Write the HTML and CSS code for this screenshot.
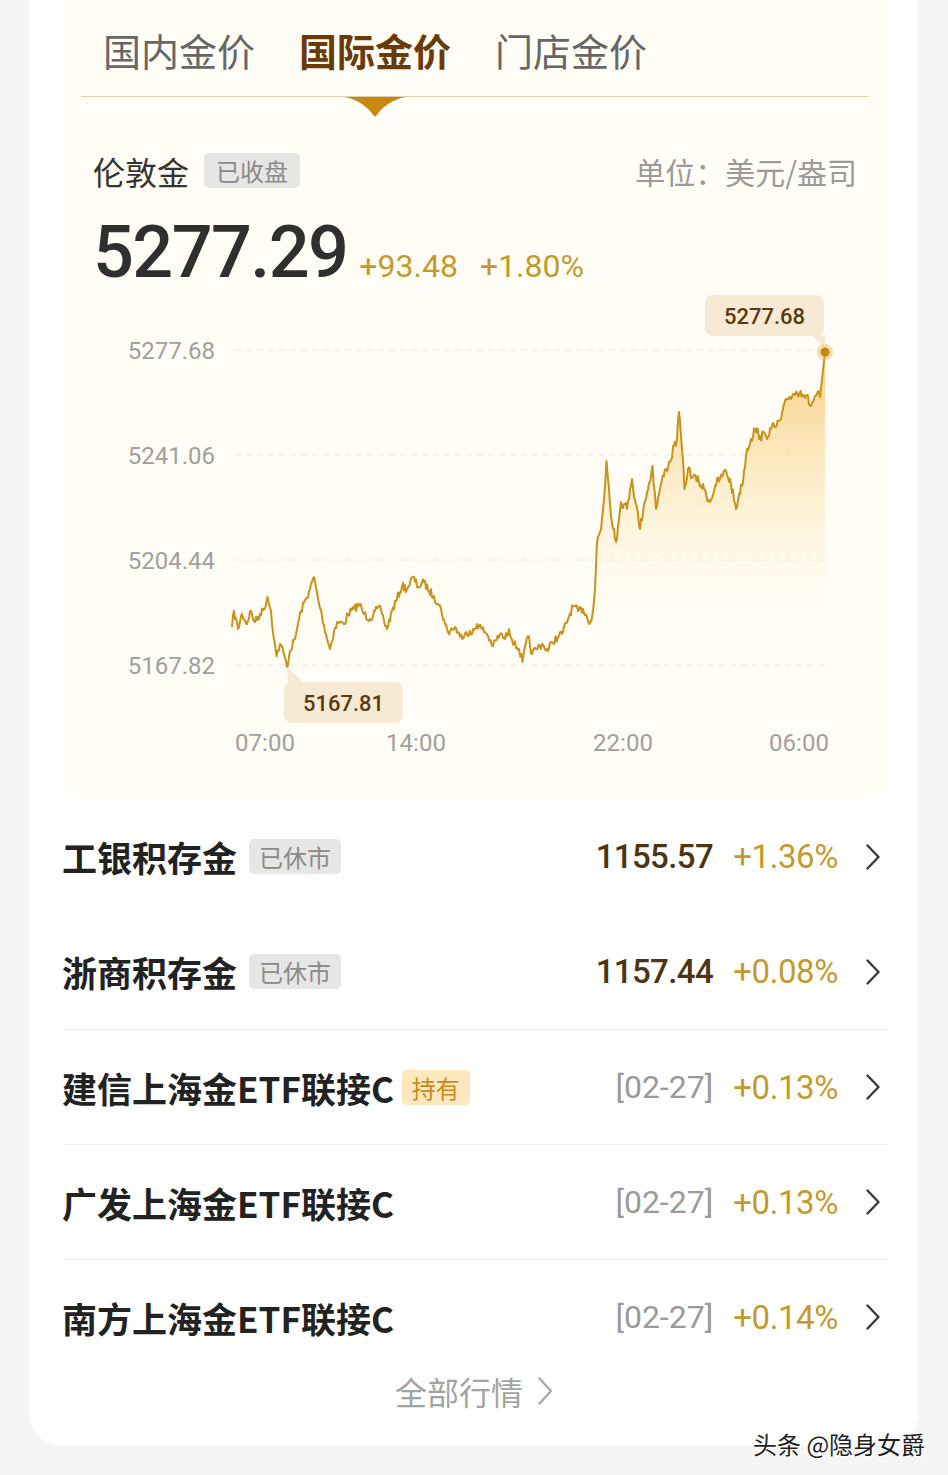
FILE: index.html
```html
<!DOCTYPE html>
<html lang="zh-CN">
<head>
    <meta charset="UTF-8">
    <meta name="viewport" content="width=device-width, initial-scale=1.0">
    <title>金价</title>
    <link rel="stylesheet" href="styles.css">
</head>
<body>
    <div class="card">
        <div class="panel">
            <div class="tabs">
                <span class="tab">国内金价</span>
                <span class="tab active">国际金价</span>
                <span class="tab">门店金价</span>
            </div>

            <div class="head">
                <span class="name">伦敦金</span>
                <span class="chip">已收盘</span>
                <span class="unit">单位：美元/盎司</span>
            </div>

            <div class="price">
                <span class="big">5277.29</span>
                <span class="chg">+93.48</span>
                <span class="chg">+1.80%</span>
            </div>

            <svg class="chart" width="826" height="510" viewBox="0 0 826 510">
                <defs>
                    <linearGradient id="fillgrad" gradientUnits="userSpaceOnUse" x1="0" y1="60" x2="0" y2="330">
                        <stop offset="0" stop-color="#f6bd55" stop-opacity="0.75"/>
                        <stop offset="0.55" stop-color="#fbdc9c" stop-opacity="0.4"/>
                        <stop offset="1" stop-color="#fdf0d0" stop-opacity="0"/>
                    </linearGradient>
                </defs>
                <g class="grid">
                    <line x1="173" y1="61" x2="768" y2="61"/>
                    <line x1="173" y1="166" x2="768" y2="166"/>
                    <line x1="173" y1="271" x2="768" y2="271"/>
                    <line x1="173" y1="376" x2="768" y2="376"/>
                </g>
                <g class="ylab">
                    <text x="153" y="69.5">5277.68</text>
                    <text x="153" y="174.5">5241.06</text>
                    <text x="153" y="279.5">5204.44</text>
                    <text x="153" y="384.5">5167.82</text>
                </g>
                <g class="xlab">
                    <text x="203" y="461.5">07:00</text>
                    <text x="354" y="461.5">14:00</text>
                    <text x="561" y="461.5">22:00</text>
                    <text x="737" y="461.5">06:00</text>
                </g>
                <path id="area" fill="url(#fillgrad)" d=""/>
                <path id="line" class="line" d=""/>

                <rect class="tip" x="643" y="6" width="119" height="41" rx="8"/>
                <polygon class="tip" points="749,46 764,46 762,58"/>
                <text class="tiptext" x="702.5" y="34.5">5277.68</text>
                <circle cx="763" cy="63" r="8" fill="#e3b85a" fill-opacity="0.45"/>
                <circle cx="763" cy="63" r="4.5" fill="#c8870f"/>

                <polygon class="tip" points="225,378 226,394 242,394"/>
                <rect class="tip" x="222" y="393" width="119" height="41" rx="8"/>
                <text class="tiptext" x="281.5" y="421.5">5167.81</text>
            </svg>
        </div>

        <div class="list">
            <div class="row">
                <span class="rname">工银积存金</span>
                <span class="chip">已休市</span>
                <span class="fill"></span>
                <span class="num">1155.57</span>
                <span class="pct">+1.36%</span>
                <svg class="arrow" width="14" height="26" viewBox="0 0 14 26"><polyline points="1.5,1.5 12.5,13 1.5,24.5"/></svg>
            </div>
            <div class="row">
                <span class="rname">浙商积存金</span>
                <span class="chip">已休市</span>
                <span class="fill"></span>
                <span class="num">1157.44</span>
                <span class="pct">+0.08%</span>
                <svg class="arrow" width="14" height="26" viewBox="0 0 14 26"><polyline points="1.5,1.5 12.5,13 1.5,24.5"/></svg>
            </div>
            <div class="row line-top">
                <span class="rname">建信上海金ETF联接C</span>
                <span class="chip hold">持有</span>
                <span class="fill"></span>
                <span class="date">[02-27]</span>
                <span class="pct">+0.13%</span>
                <svg class="arrow" width="14" height="26" viewBox="0 0 14 26"><polyline points="1.5,1.5 12.5,13 1.5,24.5"/></svg>
            </div>
            <div class="row line-top">
                <span class="rname">广发上海金ETF联接C</span>
                <span class="fill"></span>
                <span class="date">[02-27]</span>
                <span class="pct">+0.13%</span>
                <svg class="arrow" width="14" height="26" viewBox="0 0 14 26"><polyline points="1.5,1.5 12.5,13 1.5,24.5"/></svg>
            </div>
            <div class="row line-top">
                <span class="rname">南方上海金ETF联接C</span>
                <span class="fill"></span>
                <span class="date">[02-27]</span>
                <span class="pct">+0.14%</span>
                <svg class="arrow" width="14" height="26" viewBox="0 0 14 26"><polyline points="1.5,1.5 12.5,13 1.5,24.5"/></svg>
            </div>
        </div>

        <div class="more">
            <span>全部行情</span>
            <svg class="more-arrow" width="15" height="28" viewBox="0 0 15 28"><polyline points="1.5,1.5 13,14 1.5,26.5"/></svg>
        </div>
    </div>

    <div class="mark">头条 @隐身女爵</div>

    <script>
        // key points of the price line, page coordinates
        var keys = [[232,628],[234,612],[238,630],[242,615],[247,625],[250,612],[255,623],[260,615],[264,610],[267.5,598],
            [271,612],[274,640],[276.5,657],[280,645],[284,655],[287,668],[290,652],[295,640],[298,625],[301,612],[306,600],
            [310,590],[314,578],[318,600],[322,617],[326,635],[330,650],[334,632],[338,623],[344,625],[348,615],[354,610],
            [359.5,605],[364,615],[370,620],[375,612],[381,610],[384,622],[387,630],[392,612],[397,600],[402,587],[407,590],
            [413,578],[418,588],[424,583],[429,592],[434,597],[438,605],[441,610],[445,625],[448,633],[455,628],[460,638],
            [466,633],[472,635],[477,625],[482,630],[487,635],[493,647],[500,635],[505,640],[509,630],[514,645],[519,650],
            [522.5,663],[528,637],[532,655],[536,650],[542,645],[548,652],[552,643],[558,638],[563,633],[568,620],[573,607],
            [578,612],[583,610],[587,618],[590.5,623],[593,612],[595,590],[597,543],[601,530],[604,500],[606.5,462],[609,490],
            [611,517],[614,530],[616,543],[619,520],[621,503],[624,505],[627,510],[630,490],[632,480],[636,505],[640,530],
            [644,505],[648,490],[652.5,467],[656,510],[659,495],[661.5,483],[666,470],[670,463],[674,447],[677,440],[679,413],
            [682,450],[684.5,490],[688,470],[693,478],[699,483],[704,490],[710,503],[715,487],[720,480],[726,472],[731,485],
            [736,510],[739,495],[742,487],[747,450],[751,440],[755,430],[760,437],[766,437],[771,430],[776.5,427],[781,420],
            [787,400],[793,395],[800.5,392],[806,397],[811,407],[814,400],[817,395],[820,398],[822,380],[825,353]];

        var seed = 7;
        function rnd() {
            seed = (seed * 16807) % 2147483647;
            return seed / 2147483647;
        }

        var pts = [];
        for (var i = 0; i < keys.length - 1; i++) {
            var a = keys[i], b = keys[i + 1];
            var steps = Math.max(1, Math.round((b[0] - a[0]) / 1.1));
            for (var s = 0; s < steps; s++) {
                var t = s / steps;
                var x = a[0] + (b[0] - a[0]) * t;
                var y = a[1] + (b[1] - a[1]) * t;
                if (s > 0 && i < keys.length - 3) {
                    var amp = x > 595 ? 10 : 8;
                    y += (rnd() - 0.5) * amp;
                }
                pts.push([x - 62, y - 290]);
            }
        }
        var last = keys[keys.length - 1];
        pts.push([last[0] - 62, last[1] - 290]);

        var d = "M" + pts.map(function(p) { return p[0].toFixed(1) + "," + p[1].toFixed(1); }).join(" L");
        document.getElementById("line").setAttribute("d", d);
        document.getElementById("area").setAttribute("d", d + " L" + pts[pts.length - 1][0].toFixed(1) + ",390 L" + pts[0][0].toFixed(1) + ",390 Z");
    </script>
</body>
</html>
```

FILE: styles.css
```css
body{
    margin: 0;
    background-color: #f5f5f5;
    font-family: "Noto Sans CJK SC", "Noto Sans", sans-serif;
    height: 1475px;
    position: relative;
}
.card{
    margin: 0 30px;
    background-color: #fff;
    border-radius: 0 0 30px 30px;
    padding-bottom: 37px;
}
.panel{
    margin: 0 30px 0 32px;
    background-color: #fffdf5;
    border-radius: 0 0 24px 24px;
    padding: 0 31px;
}
.tabs{
    position: relative;
    display: flex;
    align-items: center;
    gap: 44px;
    height: 97px;
    padding: 4px 0 0 22px;
    margin: 0 -12px;
    border-bottom: 1px solid #ddd4ae;
    box-sizing: border-box;
}
.tab{
    font-size: 38px;
    color: #666;
    line-height: 1;
}
.tab.active{
    color: #6a3b06;
    font-weight: 700;
    position: relative;
}
.tab.active::after{
    content: "";
    position: absolute;
    left: 45px;
    bottom: -48px;
    width: 62px;
    height: 20px;
    background: #c8870f;
    clip-path: path("M0 0 L62 0 C48 2 37 11 32.5 18.5 Q31 20.5 29.5 18.5 C25 11 14 2 0 0 Z");
}
.head{
    display: flex;
    align-items: center;
    margin-top: 56px;
    height: 35px;
}
.name{
    font-size: 32px;
    color: #333;
}
.chip{
    font-size: 24px;
    line-height: 35px;
    padding: 0 10px;
    border-radius: 5px;
    background-color: #e6e6e4;
    color: #8a8a8a;
    margin-left: 12px;
}
.head .chip{
    padding: 0 12px;
    margin-left: 15px;
}
.unit{
    margin-left: auto;
    font-size: 30px;
    color: #9a9a9a;
}
.price{
    display: flex;
    align-items: baseline;
    margin-top: 29px;
    height: 72px;
}
.big{
    font-family: Roboto, sans-serif;
    font-size: 72px;
    line-height: 72px;
    font-weight: 500;
    color: #2f2f2f;
    letter-spacing: -1.6px;
}
.chg{
    font-family: Roboto, sans-serif;
    font-size: 32px;
    color: #c49a2c;
    margin-left: 12px;
}
.chg + .chg{
    margin-left: 22px;
}
.chart{
    display: block;
    margin-left: -31px;
}
.grid line{
    stroke: #ede8dc;
    stroke-width: 1;
    stroke-dasharray: 6 5;
}
.ylab text, .xlab text{
    font-family: Roboto, sans-serif;
    font-size: 24px;
    fill: #a0a0a0;
}
.ylab text{
    text-anchor: end;
}
.xlab text{
    text-anchor: middle;
}
.line{
    fill: none;
    stroke: #c9921a;
    stroke-width: 2;
    stroke-linejoin: round;
}
.tip{
    fill: #f6ead5;
}
.tiptext{
    font-family: Roboto, sans-serif;
    font-size: 22px;
    font-weight: 500;
    fill: #5a3a10;
    text-anchor: middle;
}
.list{
    margin: 0 30px 0 32px;
}
.row{
    display: flex;
    align-items: center;
    height: 115px;
    box-sizing: border-box;
}
.line-top{
    border-top: 1px solid #efefef;
}
.rname{
    font-size: 35px;
    font-weight: 700;
    color: #222;
}
.chip.hold{
    background-color: #fde8bd;
    color: #c78a1c;
    margin-left: 8px;
}
.fill{
    flex: 1;
}
.num{
    font-family: Roboto, sans-serif;
    font-size: 33px;
    font-weight: 500;
    letter-spacing: -0.6px;
    color: #4b3513;
}
.date{
    font-family: Roboto, sans-serif;
    font-size: 32px;
    color: #9a9a9a;
}
.pct{
    font-family: Roboto, sans-serif;
    font-size: 33px;
    letter-spacing: -0.4px;
    color: #c49a2c;
    margin-left: 20px;
}
.arrow{
    margin-left: 28px;
    margin-right: 8px;
}
.arrow polyline{
    fill: none;
    stroke: #3a3a3a;
    stroke-width: 2.4;
    stroke-linecap: round;
    stroke-linejoin: round;
}
.more{
    display: flex;
    justify-content: center;
    align-items: center;
    gap: 15px;
    height: 34px;
    font-size: 32px;
    color: #a3a3a3;
}
.more-arrow polyline{
    fill: none;
    stroke: #a8a8a8;
    stroke-width: 2.4;
    stroke-linecap: round;
    stroke-linejoin: round;
}
.mark{
    position: absolute;
    left: 753px;
    top: 1426px;
    font-size: 24px;
    color: #1e1e1e;
    text-shadow: 1px 1px 0 #fff, -1px -1px 0 rgba(255,255,255,0.8);
}
```
